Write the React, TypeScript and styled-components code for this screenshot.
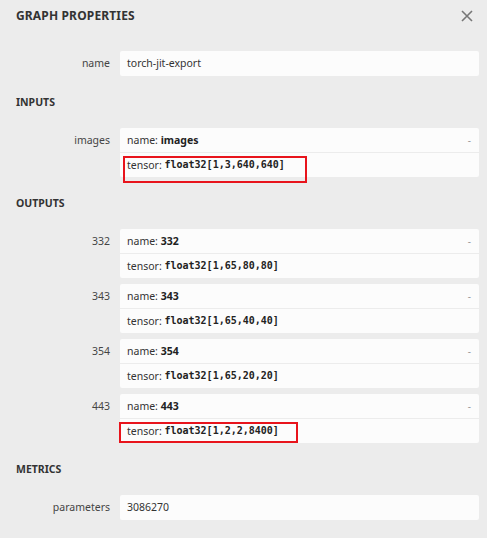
import React from "react";
import styled, { createGlobalStyle } from "styled-components";

const Global = createGlobalStyle`
  html, body { margin: 0; padding: 0; background: #ececec; }
  body {
    font-family: "Noto Sans", "Open Sans", sans-serif;
    font-size: 10.5px;
    color: #333;
  }
`;

const Panel = styled.div`
  width: 487px;
  height: 538px;
  background: #ececec;
  overflow: hidden;
  box-sizing: border-box;
`;

const TitleBar = styled.div`
  display: flex;
  align-items: center;
  justify-content: space-between;
  padding: 9px 13px 0 16px;
  height: 14px;
`;

const Title = styled.div`
  font-weight: bold;
  font-size: 12px;
  line-height: 14px;
  letter-spacing: 0.15px;
  color: #333;
`;

const Close = styled.button`
  border: 0;
  background: transparent;
  padding: 0;
  width: 14px;
  height: 14px;
  display: flex;
  align-items: center;
  justify-content: center;
  cursor: pointer;
`;

const Body = styled.div`
  padding-top: 28px;
`;

const SectionHeader = styled.div`
  margin: 19px 0;
  padding-left: 16px;
  font-weight: bold;
  font-size: 10.5px;
  line-height: 14px;
  color: #333;
`;

const Rows = styled.div`
  display: flex;
  flex-direction: column;
  gap: 6px;
`;

const Row = styled.div`
  display: grid;
  grid-template-columns: 120px 1fr;
  margin-right: 8px;
`;

const Label = styled.div`
  text-align: right;
  padding-right: 10px;
  line-height: 24px;
  color: #444;
  white-space: nowrap;
`;

const ValueBox = styled.div`
  background: #fcfcfc;
  border-radius: 2px;
  padding-bottom: 1px;
`;

const Line = styled.div<{ $border?: boolean }>`
  position: relative;
  display: flex;
  align-items: center;
  height: 24px;
  box-sizing: border-box;
  padding: 0 7px;
  border-top: ${(p) => (p.$border ? "1px solid #ececec" : "0")};
  white-space: nowrap;
  color: #333;
`;

const Strong = styled.b`
  font-weight: bold;
  color: #222;
`;

const Code = styled.code`
  font-family: "DejaVu Sans Mono", "Liberation Mono", monospace;
  font-size: 10px;
  font-weight: bold;
  color: #222;
`;

const Expander = styled.span`
  margin-left: auto;
  margin-right: 1px;
  color: #999;
  font-size: 10px;
`;

const Highlight = styled.div<{ $left: number; $top: number; $w: number; $h: number }>`
  position: absolute;
  left: ${(p) => p.$left}px;
  top: ${(p) => p.$top}px;
  width: ${(p) => p.$w}px;
  height: ${(p) => p.$h}px;
  border: 2px solid #e8141c;
  box-sizing: border-box;
  pointer-events: none;
`;

type HL = { left: number; top: number; w: number; h: number };

const Tensor: React.FC<{ label: string; type: string; hl?: HL }> = ({ label, type, hl }) => (
  <Row>
    <Label>{label}</Label>
    <ValueBox>
      <Line>
        name:&nbsp;<Strong>{label}</Strong>
        <Expander>-</Expander>
      </Line>
      <Line $border>
        tensor:&nbsp;<Code>{type}</Code>
        {hl && <Highlight $left={hl.left} $top={hl.top} $w={hl.w} $h={hl.h} />}
      </Line>
    </ValueBox>
  </Row>
);

const Simple: React.FC<{ label: string; value: string }> = ({ label, value }) => (
  <Row>
    <Label>{label}</Label>
    <ValueBox>
      <Line>{value}</Line>
    </ValueBox>
  </Row>
);

export default function App() {
  return (
    <Panel>
      <Global />
      <TitleBar>
        <Title>GRAPH PROPERTIES</Title>
        <Close aria-label="close">
          <svg width="12" height="12" viewBox="0 0 12 12">
            <path d="M1 1 L11 11 M11 1 L1 11" stroke="#777" strokeWidth="1.6" fill="none" />
          </svg>
        </Close>
      </TitleBar>
      <Body>
        <Rows>
          <Simple label="name" value="torch-jit-export" />
        </Rows>
        <SectionHeader>INPUTS</SectionHeader>
        <Rows>
          <Tensor label="images" type="float32[1,3,640,640]" hl={{ left: 3, top: 3, w: 184, h: 27 }} />
        </Rows>
        <SectionHeader>OUTPUTS</SectionHeader>
        <Rows>
          <Tensor label="332" type="float32[1,65,80,80]" />
          <Tensor label="343" type="float32[1,65,40,40]" />
          <Tensor label="354" type="float32[1,65,20,20]" />
          <Tensor label="443" type="float32[1,2,2,8400]" hl={{ left: -1, top: 3, w: 179, h: 21 }} />
        </Rows>
        <SectionHeader>METRICS</SectionHeader>
        <Rows>
          <Simple label="parameters" value="3086270" />
        </Rows>
      </Body>
    </Panel>
  );
}
